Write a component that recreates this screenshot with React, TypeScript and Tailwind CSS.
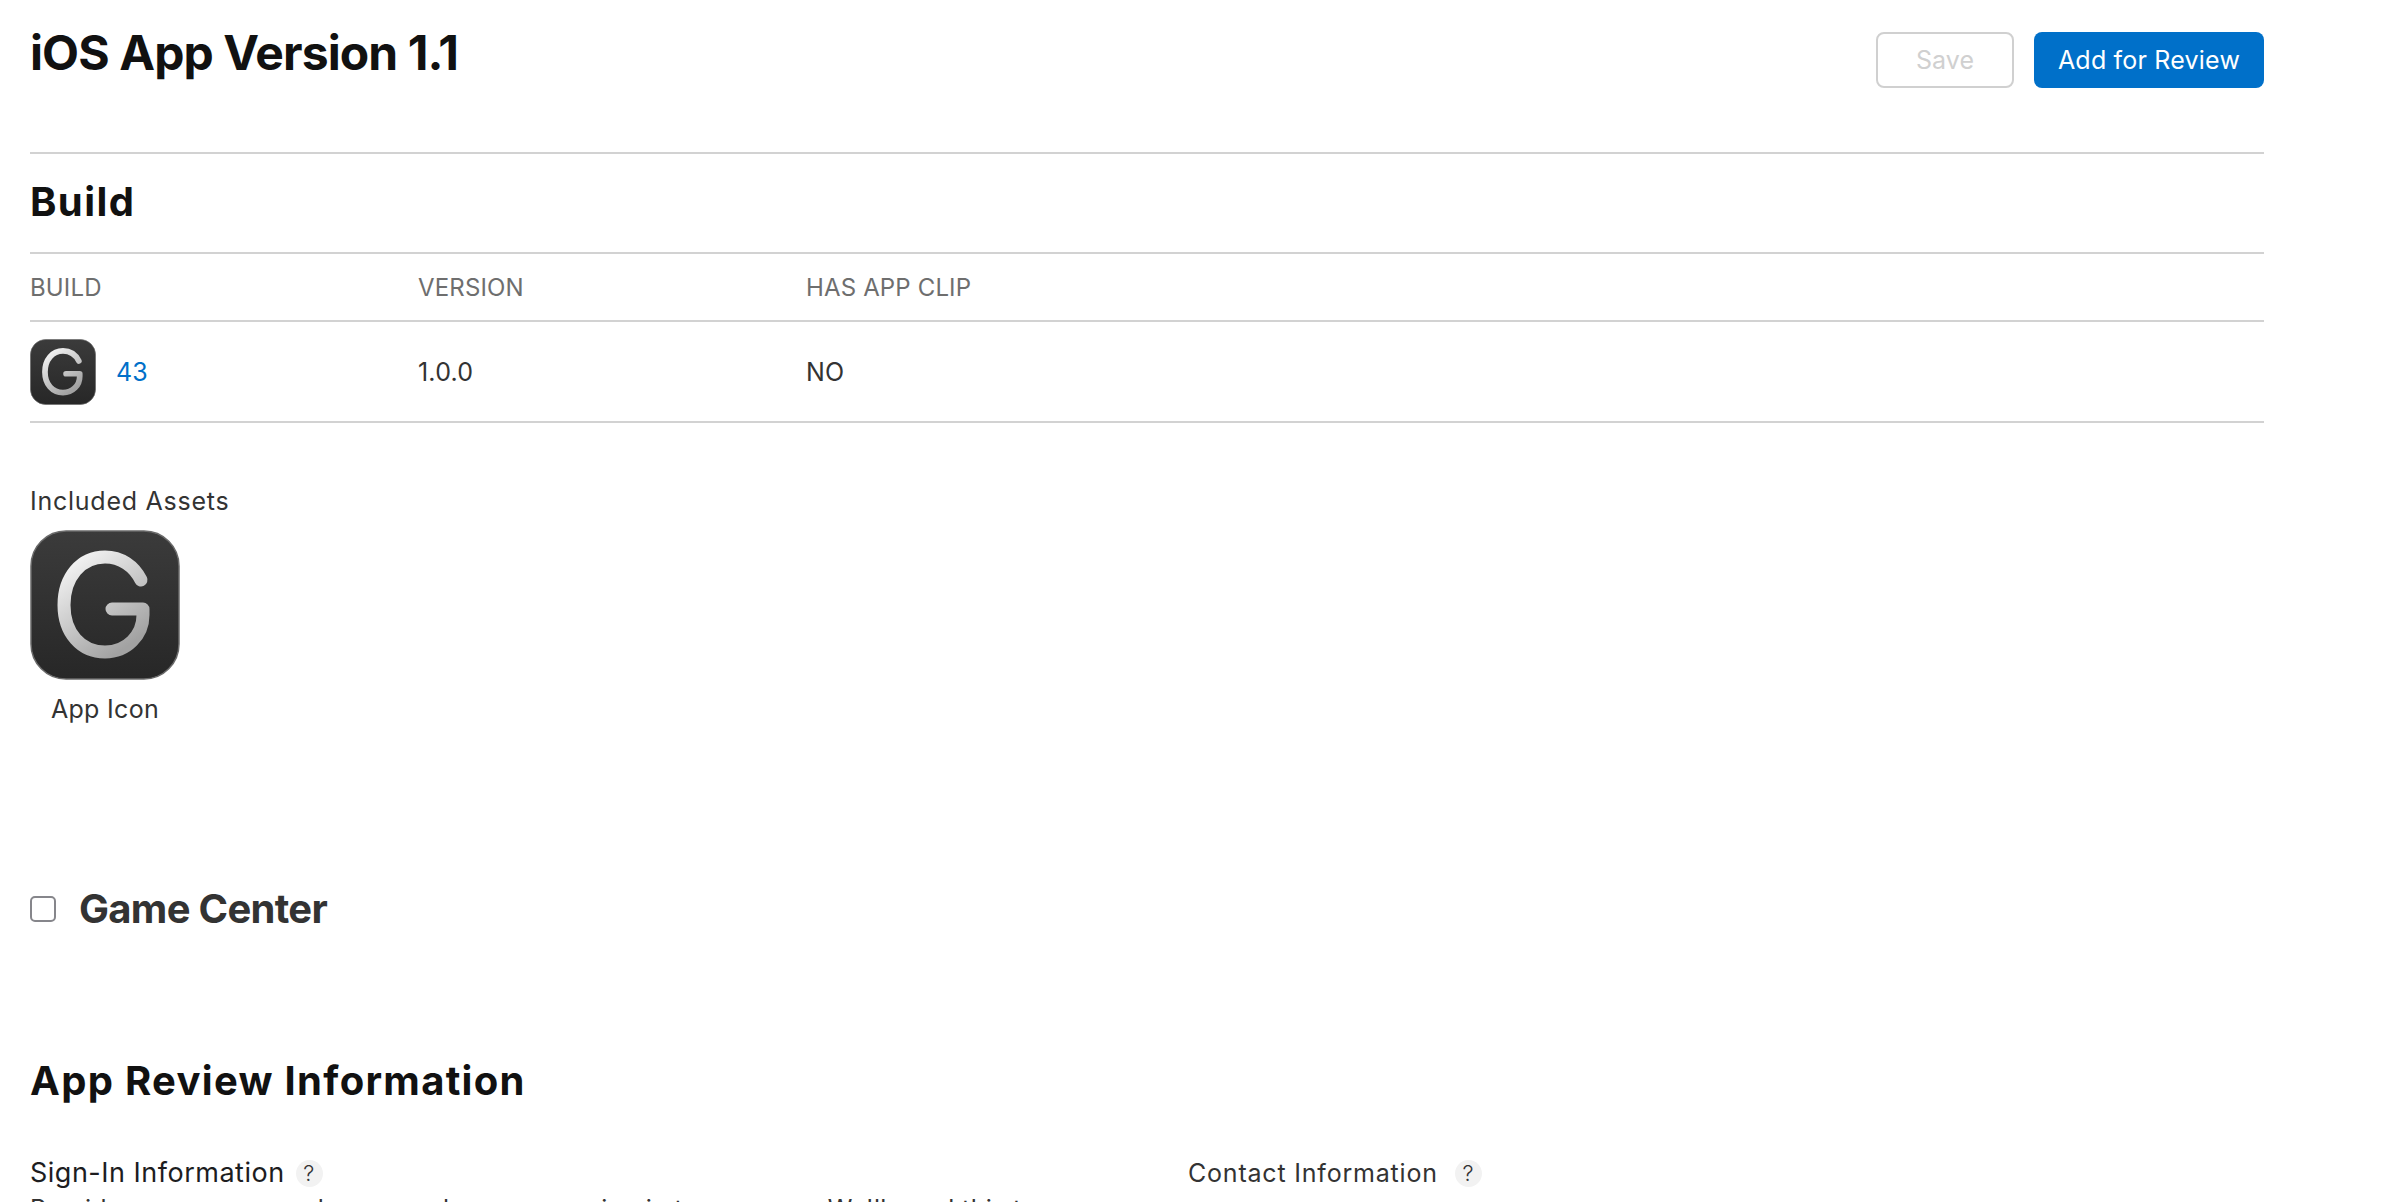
import React from 'react';

function HelpBadge() {
  return (
    <span className="flex h-[27px] w-[27px] items-center justify-center rounded-full bg-[#f2f2f2] text-[22px] leading-none font-light text-[#333336]">
      ?
    </span>
  );
}

// The G mark shared by both app icon sizes
function AppIcon({ className, id }: { className: string; id: string }) {
  return (
    <svg viewBox="0 0 150 150" className={className}>
      <defs>
        <linearGradient id={`${id}-bg`} x1="0" y1="0" x2="0" y2="1">
          <stop offset="0" stopColor="#3b3b3b" />
          <stop offset="1" stopColor="#272727" />
        </linearGradient>
        <linearGradient id={`${id}-fg`} x1="0.1" y1="0" x2="0.7" y2="1">
          <stop offset="0" stopColor="#f5f5f5" />
          <stop offset="1" stopColor="#a2a2a2" />
        </linearGradient>
      </defs>
      <rect x="1" y="1" width="148" height="148" rx="35" fill={`url(#${id}-bg)`} stroke="#6a6a6a" strokeWidth="1.5" />
      <path
        d="M111 50 C104 36 91 27 75 27 C51 27 34 47 34 75 C34 103 51 122 75 122 C97 122 113 105 113 85 L113 79 L82 79"
        fill="none"
        stroke={`url(#${id}-fg)`}
        strokeWidth="13"
        strokeLinecap="round"
        strokeLinejoin="round"
      />
    </svg>
  );
}

export default function App() {
  return (
    <div className="h-[1202px] w-[2388px] overflow-hidden bg-white font-['Inter',sans-serif] text-[#333333]">
      <div className="ml-[30px] w-[2234px]">
        <div className="flex h-[152px] items-start justify-between">
          <h1 className="mt-[26px] text-[48px] leading-[54px] font-bold tracking-[-0.9px] text-[#111111]">
            iOS App Version 1.1
          </h1>
          <div className="mt-[32px] flex gap-5">
            <button className="h-[56px] w-[138px] rounded-[8px] border-2 border-[#d0d0d0] bg-white pt-[2px] text-[25px] tracking-[0.1px] text-[#d0d0d0]">
              Save
            </button>
            <button className="h-[56px] w-[230px] rounded-[8px] bg-[#0070c9] pt-[2px] text-[25px] tracking-[0.2px] text-white">
              Add for Review
            </button>
          </div>
        </div>

        <div className="flex h-[102px] items-center border-t-2 border-b-2 border-[#d2d2d2] pb-[3px]">
          <h2 className="text-[40px] font-bold tracking-[1.4px] text-[#111111]">Build</h2>
        </div>

        <div className="flex h-[68px] items-center border-b-2 border-[#d2d2d2] pt-[2px] text-[24px] tracking-[0.15px] text-[#6e6e6e]">
          <span className="w-[388px]">BUILD</span>
          <span className="w-[388px]">VERSION</span>
          <span>HAS APP CLIP</span>
        </div>

        <div className="flex h-[101px] items-center border-b-2 border-[#d2d2d2] text-[25px] tracking-[0.2px]">
          <div className="flex w-[388px] items-center gap-5">
            <AppIcon id="small" className="h-[66px] w-[66px]" />
            <a className="pt-[2px] text-[#0070c9]">43</a>
          </div>
          <span className="w-[388px] pt-[2px]">1.0.0</span>
          <span className="pt-[2px]">NO</span>
        </div>

        <div className="mt-[62px] text-[25px] leading-[32px] tracking-[0.75px]">Included Assets</div>
        <div className="mt-[13px] flex w-[150px] flex-col items-center">
          <AppIcon id="large" className="h-[150px] w-[150px]" />
          <span className="mt-[13px] text-[25px] leading-[32px] tracking-[0.3px]">App Icon</span>
        </div>

        <div className="mt-[158px] flex items-center gap-[23px]">
          <span className="h-[26px] w-[26px] rounded-[5px] border-2 border-[#86868b] bg-white" />
          <h2 className="text-[40px] leading-[52px] font-bold tracking-[-0.7px]">Game Center</h2>
        </div>

        <h2 className="mt-[120px] text-[40px] leading-[52px] font-bold tracking-[1.3px] text-[#111111]">
          App Review Information
        </h2>

        <div className="mt-[47px] flex">
          <div className="w-[1158px]">
            <div className="flex items-center gap-[11px] text-[27px] leading-[38px] tracking-[0.5px] text-[#1d1d1f]">
              Sign-In Information <HelpBadge />
            </div>
            <p className="mt-[1px] text-[25px] leading-[32px] tracking-[0.35px] whitespace-nowrap">
              Provide a username and password so we can sign in to your app. We'll need this to
            </p>
          </div>
          <div className="flex items-center gap-[17px] self-start text-[25px] leading-[38px] tracking-[0.8px]">
            Contact Information <HelpBadge />
          </div>
        </div>
      </div>
    </div>
  );
}
